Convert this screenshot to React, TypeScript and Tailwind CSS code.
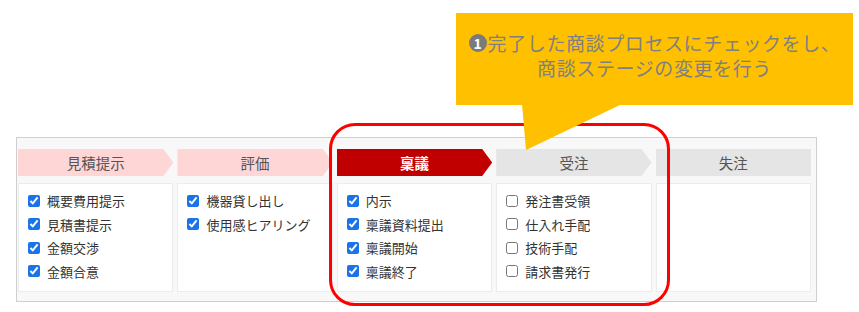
import React from "react";

type Stage = {
  title: string;
  tone: "pink" | "red" | "gray";
  arrow: boolean;
  items: { label: string; done: boolean }[];
};

const stages: Stage[] = [
  {
    title: "見積提示",
    tone: "pink",
    arrow: true,
    items: [
      { label: "概要費用提示", done: true },
      { label: "見積書提示", done: true },
      { label: "金額交渉", done: true },
      { label: "金額合意", done: true },
    ],
  },
  {
    title: "評価",
    tone: "pink",
    arrow: true,
    items: [
      { label: "機器貸し出し", done: true },
      { label: "使用感ヒアリング", done: true },
    ],
  },
  {
    title: "稟議",
    tone: "red",
    arrow: true,
    items: [
      { label: "内示", done: true },
      { label: "稟議資料提出", done: true },
      { label: "稟議開始", done: true },
      { label: "稟議終了", done: true },
    ],
  },
  {
    title: "受注",
    tone: "gray",
    arrow: true,
    items: [
      { label: "発注書受領", done: false },
      { label: "仕入れ手配", done: false },
      { label: "技術手配", done: false },
      { label: "請求書発行", done: false },
    ],
  },
  { title: "失注", tone: "gray", arrow: false, items: [] },
];

const toneClass = {
  pink: "bg-[#ffd6d6] text-[#555555]",
  red: "bg-[#c00000] text-white font-bold",
  gray: "bg-[#e5e5e5] text-[#555555]",
};

export default function App() {
  return (
    <div
      className="relative w-[859px] h-[312px] bg-white overflow-hidden"
      style={{ fontFamily: '"Noto Sans CJK JP", "Noto Sans", sans-serif' }}
    >
      {/* Stage panel */}
      <div className="absolute left-[16px] top-[137px] w-[801px] h-[165px] border border-[#cfcfcf] bg-[#f8f8f8] pt-[11px] pl-[1px] pr-[5px]">
        <div className="grid grid-cols-5 gap-x-[4px]">
          {stages.map((s) => (
            <div key={s.title} className="flex flex-col gap-[7px]">
              <div
                className={`h-[27px] flex items-center justify-center text-[14.5px] ${toneClass[s.tone]} ${
                  s.arrow
                    ? "[clip-path:polygon(0_0,calc(100%_-_10px)_0,100%_50%,calc(100%_-_10px)_100%,0_100%)]"
                    : ""
                }`}
              >
                {s.title}
              </div>
              <div className="h-[109px] bg-white border border-[#ececec] pt-[5px] pl-[9px]">
                {s.items.map((it) => (
                  <label
                    key={it.label}
                    className="flex items-center gap-[7px] h-[23.5px] text-[13px] text-[#333333]"
                  >
                    <input
                      type="checkbox"
                      checked={it.done}
                      readOnly
                      className="w-[12px] h-[12px] m-0 accent-[#1a73e8]"
                    />
                    {it.label}
                  </label>
                ))}
              </div>
            </div>
          ))}
        </div>
      </div>

      {/* Highlight frame */}
      <div className="absolute left-[329px] top-[123px] w-[341px] h-[183px] rounded-[26px] border-[3px] border-[#ff0000]" />

      {/* Callout */}
      <div className="absolute left-[456px] top-[13px] w-[397px] h-[92px] bg-[#ffc000] flex flex-col items-center justify-center text-[19px] leading-[25px] tracking-[0.6px] text-[#808080] pb-[8px]">
        <div className="flex items-center">
          <span className="inline-flex items-center justify-center w-[18px] h-[18px] rounded-full bg-[#7a7a7a] text-white text-[14px] font-bold leading-none mr-[1px] tracking-normal">
            1
          </span>
          完了した商談プロセスにチェックをし、
        </div>
        <div>商談ステージの変更を行う</div>
      </div>
      <svg
        className="absolute left-0 top-0"
        width="859"
        height="312"
        viewBox="0 0 859 312"
      >
        <polygon points="522,104 622,104 526,150" fill="#ffc000" />
      </svg>
    </div>
  );
}
